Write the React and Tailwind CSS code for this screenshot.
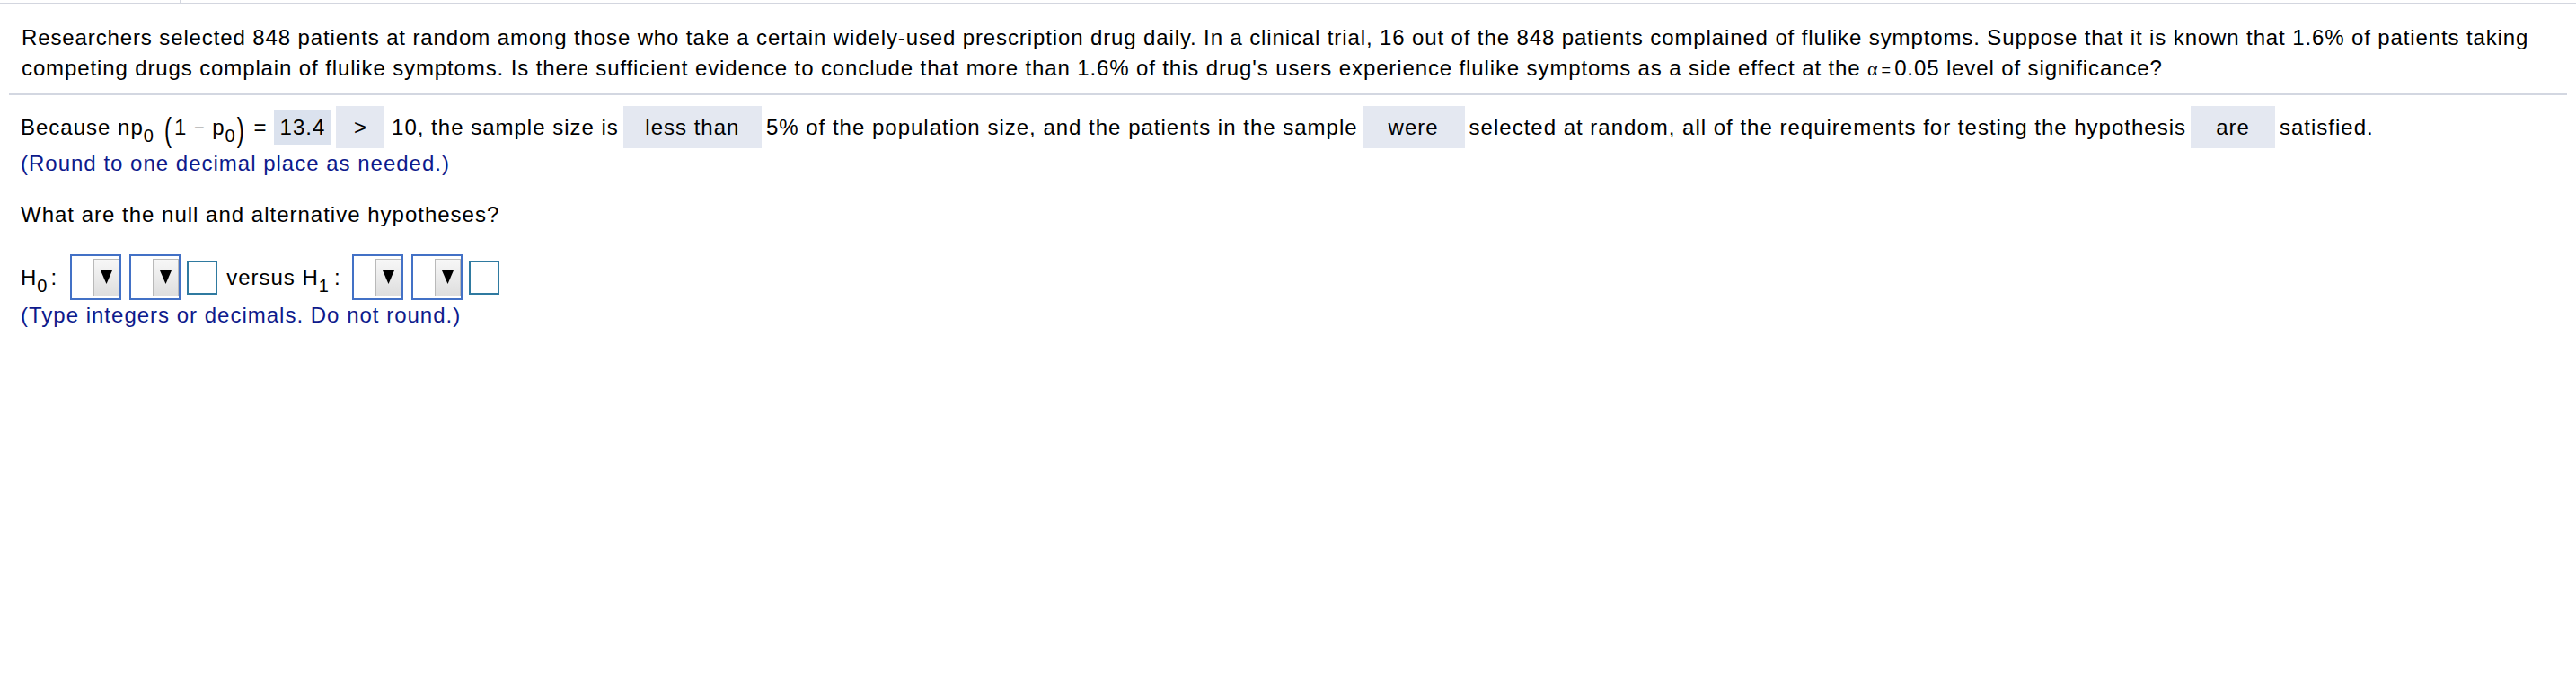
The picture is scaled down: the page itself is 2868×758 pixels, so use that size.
import React from "react";

const Sub = ({ children }) => (
  <span className="relative top-[9px] text-[20px] leading-none tracking-normal">{children}</span>
);

const Paren = ({ children }) => (
  <span className="inline-block translate-y-[3px] scale-y-[1.5] px-[2px] text-[24px] leading-none">
    {children}
  </span>
);

const Choice = ({ text, width, dark }) => (
  <span
    className={`mx-[5px] inline-flex items-center justify-center ${width} ${
      dark ? "h-[39px] bg-[#dbe2ee]" : "h-[47px] bg-[#e4e8f1]"
    }`}
  >
    {text}
  </span>
);

const Dropdown = () => (
  <div className="flex h-[51px] w-[57px] items-center justify-end border-2 border-[#4371c6] bg-white">
    <div className="flex h-[42px] w-[29px] items-center justify-center border border-[#b9b9b9] bg-gradient-to-b from-[#f7f7f7] to-[#dedede]">
      <svg width="13" height="15" viewBox="0 0 13 15">
        <polygon points="0,0 13,0 6.5,15" fill="#000" />
      </svg>
    </div>
  </div>
);

const Blank = () => (
  <div className="h-[38px] w-[34px] border-2 border-[#2f7aa0] bg-white" />
);

export default function App() {
  return (
    <div className="min-h-[758px] bg-white font-['Liberation_Sans',Arial,sans-serif] text-[24px] tracking-[1px] text-black">
      <div className="flex h-[5px] border-b-2 border-[#d3d6df]">
        <div className="w-[202px] border-r-2 border-[#d3d6df]" />
      </div>

      <p className="pl-6 pr-2 pt-[20px] leading-[34px] tracking-[0.88px]">
        Researchers selected 848 patients at random among those who take a certain widely-used
        prescription drug daily. In a clinical trial, 16 out of the 848 patients complained of flulike
        symptoms. Suppose that it is known that 1.6% of patients taking competing drugs complain of
        flulike symptoms. Is there sufficient evidence to conclude that more than 1.6% of this drug's
        users experience flulike symptoms as a side effect at the{" "}
        <span className="font-['Liberation_Serif',serif] text-[22px] leading-none tracking-normal">
          α
        </span>
        <span className="px-[4px] text-[18px] leading-none tracking-normal">=</span>0.05 level of
        significance?
      </p>

      <div className="mx-[10px] mt-[11px] h-[2px] bg-[#d3d7e1]" />

      <div className="pl-[23px]">
        <div className="mt-[12px] flex h-[47px] items-center whitespace-pre leading-[34px]">
          <span>Because np</span>
          <Sub>0</Sub>
          <span className="w-[10px]" />
          <Paren>(</Paren>
          <span>1 </span>
          <span className="text-[20px]">−</span>
          <span> p</span>
          <Sub>0</Sub>
          <Paren>)</Paren>
          <span> =</span>
          <Choice text="13.4" width="w-[63px] ml-[8px] mr-[6px]" dark />
          <span className="h-[47px] w-[54px] bg-[#e4e8f1] text-center leading-[47px]">&gt;</span>
          <span> 10, the sample size is</span>
          <Choice text="less than" width="w-[154px]" />
          <span>5% of the population size, and the patients in the sample</span>
          <Choice text="were" width="w-[114px]" />
          <span>selected at random, all of the requirements for testing the hypothesis</span>
          <Choice text="are" width="w-[94px]" />
          <span>satisfied.</span>
        </div>
        <p className="leading-[34px] text-[#0e1a8c]">(Round to one decimal place as needed.)</p>

        <p className="mt-[23px] leading-[34px]">What are the null and alternative hypotheses?</p>

        <div className="mt-[27px] flex items-center">
          <span>H</span>
          <Sub>0</Sub>
          <span className="ml-[4px]">:</span>
          <div className="ml-[14px] flex items-center gap-[9px]">
            <Dropdown />
            <Dropdown />
          </div>
          <div className="ml-[7px]">
            <Blank />
          </div>
          <span className="ml-[10px]">versus H</span>
          <Sub>1</Sub>
          <span className="ml-[6px]">:</span>
          <div className="ml-[12px] flex items-center gap-[9px]">
            <Dropdown />
            <Dropdown />
          </div>
          <div className="ml-[7px]">
            <Blank />
          </div>
        </div>
        <p className="leading-[34px] text-[#0e1a8c]">(Type integers or decimals. Do not round.)</p>
      </div>
    </div>
  );
}
